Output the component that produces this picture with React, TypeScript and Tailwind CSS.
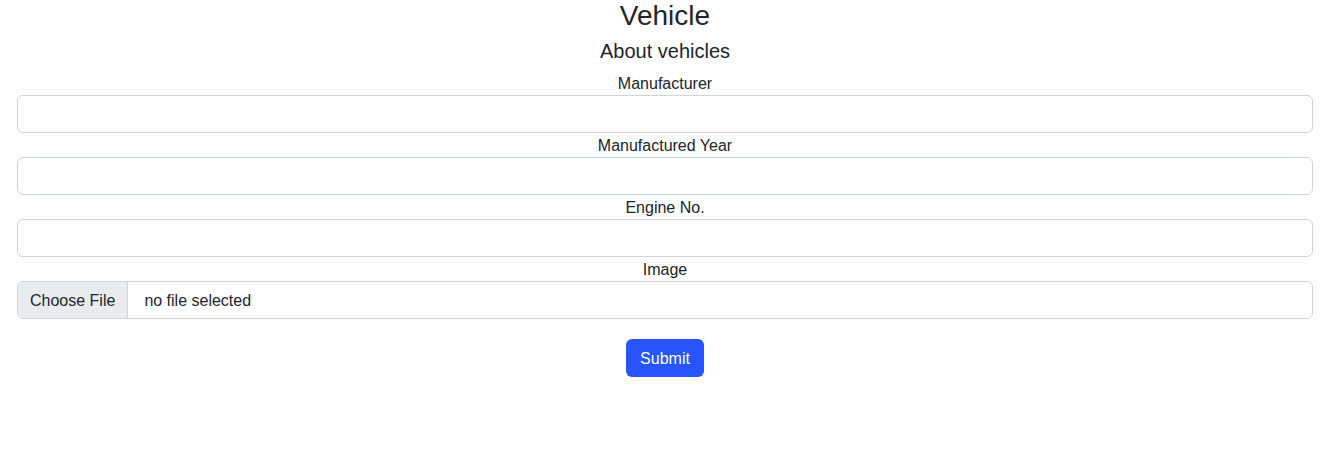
import React from "react";

const fields = ["Manufacturer", "Manufactured Year", "Engine No."];

const App = () => {
  return (
    <div className="min-h-[469px] bg-white text-[#212529] font-['Liberation_Sans',Arial,sans-serif] pl-[17px] pr-[27px]">
      <h3 className="text-center text-[28px] leading-[32px] font-medium mb-[7px]">Vehicle</h3>
      <h5 className="text-center text-[20px] leading-[24px] font-medium mb-[8px]">About vehicles</h5>

      <form className="flex flex-col" onSubmit={(e) => e.preventDefault()}>
        {fields.map((f) => (
          <div key={f} className="flex flex-col">
            <label className="pt-[1px] text-center text-[16px] leading-[23px]">{f}</label>
            <input
              type="text"
              className="h-[38px] w-full rounded-[6px] border border-[#ced4da] px-3 text-[16px] outline-none"
            />
          </div>
        ))}

        <div className="flex flex-col">
          <label className="pt-[1px] text-center text-[16px] leading-[23px]">Image</label>
          <div className="flex h-[38px] w-full items-center overflow-hidden rounded-[6px] border border-[#ced4da] pt-[1px] text-[16px]">
            <span className="-mt-[1px] flex h-[37px] items-center border-r border-[#ced4da] bg-[#e9ecef] px-3 pt-[2px]">Choose File</span>
            <span className="pl-4">no file selected</span>
          </div>
        </div>

        <div className="mt-[20px] flex justify-center">
          <button
            type="submit"
            className="h-[38px] rounded-[6px] bg-[#2754ff] px-[14px] pt-[1px] text-[16px] text-white"
          >
            Submit
          </button>
        </div>
      </form>
    </div>
  );
};

export default App;
